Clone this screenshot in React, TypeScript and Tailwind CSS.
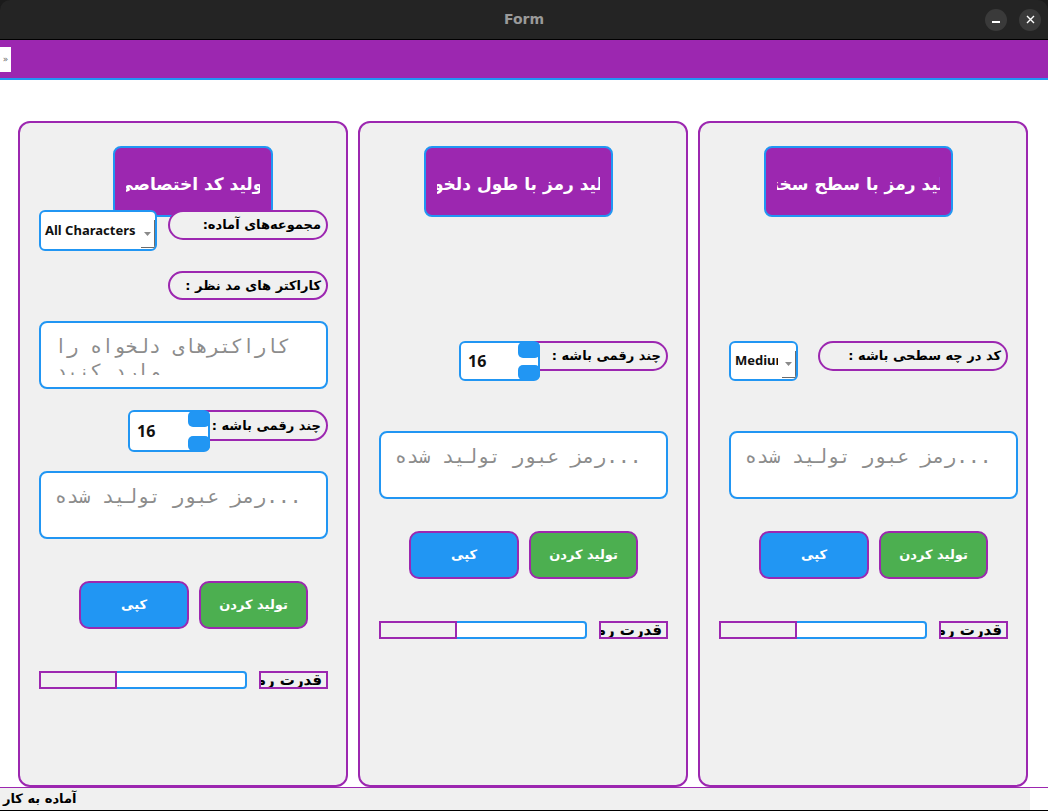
type Cls = { className?: string }

function TitleBox({ text, className = '' }: { text: string } & Cls) {
  return (
    <div className={`flex h-[71px] shrink-0 rounded-[8px] border-2 border-[#2196f3] bg-[#9c27b0] px-[11px] ${className}`}>
      <div className="flex flex-1 items-center justify-center overflow-hidden">
        <span dir="rtl" className="shrink-0 whitespace-nowrap pt-[6px] font-['DejaVu_Sans'] text-[17px] font-bold text-white">
          {text}
        </span>
      </div>
    </div>
  )
}

function Pill({ text, className = '' }: { text: string } & Cls) {
  return (
    <div
      dir="rtl"
      className={`flex shrink-0 items-center overflow-hidden whitespace-nowrap rounded-full border-2 border-[#9c27b0] bg-[#f0f0f0] pr-[5px] font-['DejaVu_Sans'] text-[13px] font-bold text-black ${className}`}
    >
      {text}
    </div>
  )
}

function Combo({ value, className = '' }: { value: string } & Cls) {
  return (
    <div className={`relative z-10 flex shrink-0 items-stretch overflow-hidden rounded-[6px] border-2 border-[#2196f3] bg-white ${className}`}>
      <div className="mr-[4px] flex min-w-0 flex-1 items-center overflow-hidden whitespace-nowrap pl-[4px] font-['Noto_Sans'] text-[13px] font-bold text-[#111]">
        {value}
      </div>
      <div className="mb-[1px] mt-[8px] flex w-[14px] shrink-0 items-center justify-center border-b border-r border-[#6b6b6b]">
        <svg width="7" height="4" viewBox="0 0 7 4">
          <path d="M0 0h7L3.5 4z" fill="#8a8a8a" />
        </svg>
      </div>
    </div>
  )
}

function Spin({ className = '' }: Cls) {
  return (
    <div className={`relative z-10 flex shrink-0 items-center rounded-[6px] border-2 border-[#2196f3] bg-white ${className}`}>
      <span className="flex-1 pl-[7px] font-['Noto_Sans'] text-[16px] font-bold text-[#111]">16</span>
      <div className="-mr-[2px] -my-[1px] flex w-[22px] flex-col justify-between self-stretch">
        <div className="h-[16px] rounded-[5px] bg-[#2196f3]" />
        <div className="h-[15px] rounded-[5px] bg-[#2196f3]" />
      </div>
    </div>
  )
}

function TextBox({ text, className = '' }: { text: string } & Cls) {
  return (
    <div className={`h-[68px] w-[289px] shrink-0 rounded-[8px] border-2 border-[#2196f3] bg-white pl-[14px] pr-[8px] pt-[11px] ${className}`}>
      <div dir="rtl" className="h-[41px] overflow-hidden text-left font-['DejaVu_Sans_Mono'] text-[19.5px] leading-[25px] text-[#8c8c8c]">
        {text}
      </div>
    </div>
  )
}

function Buttons({ className = '' }: Cls) {
  return (
    <div className={`flex shrink-0 gap-[10px] ${className}`}>
      <button
        type="button"
        className="h-[48px] w-[110px] rounded-[10px] border-2 border-[#9c27b0] bg-[#2196f3] font-['DejaVu_Sans'] text-[13px] font-bold text-white"
      >
        کپی
      </button>
      <button
        type="button"
        className="h-[48px] w-[109px] rounded-[10px] border-2 border-[#9c27b0] bg-[#4caf50] font-['DejaVu_Sans'] text-[13px] font-bold text-white"
      >
        تولید کردن
      </button>
    </div>
  )
}

function Strength({ className = '' }: Cls) {
  return (
    <div className={`flex shrink-0 items-start ${className}`}>
      <div className="flex h-[18px] w-[208px] rounded-[4px] border-2 border-[#2196f3] bg-white">
        <div className="-my-[2px] -ml-[2px] h-[18px] w-[78px] border-2 border-[#9c27b0] bg-[#f0f0f0]" />
      </div>
      <div
        dir="rtl"
        className="ml-[12px] h-[18px] w-[69px] overflow-hidden whitespace-nowrap border-2 border-[#9c27b0] pr-[4px] font-['DejaVu_Sans'] text-[15px] font-bold leading-[14px] text-black"
      >
        قدرت رمز:
      </div>
    </div>
  )
}

const panel = 'flex h-[666px] w-[330px] shrink-0 flex-col items-start rounded-[12px] border-2 border-[#9c27b0] bg-[#f0f0f0]'
const placeholder = '...رمز عبور تولید شده'

export default function App() {
  return (
    <div className="flex h-[811px] w-[1048px] flex-col overflow-hidden bg-[#1b1b1b]">
      {/* window title bar */}
      <div className="grid h-[40px] shrink-0 grid-cols-[1fr_auto_1fr] items-center rounded-t-[10px] border-b border-black bg-[#242424]">
        <div />
        <span className="font-['DejaVu_Sans'] text-[14px] font-bold text-[#9a9a9a]">Form</span>
        <div className="flex justify-end gap-[12px] pr-[7px]">
          <div className="flex h-[22px] w-[22px] items-center justify-center rounded-full bg-[#3a3a3a]">
            <div className="mt-[5px] h-[1.5px] w-[8px] bg-white" />
          </div>
          <div className="flex h-[22px] w-[22px] items-center justify-center rounded-full bg-[#3a3a3a]">
            <svg width="9" height="9" viewBox="0 0 9 9">
              <path d="M1 1l7 7M8 1L1 8" stroke="white" strokeWidth="1.4" />
            </svg>
          </div>
        </div>
      </div>

      {/* toolbar */}
      <div className="flex h-[40px] shrink-0 items-start border-b-2 border-[#2196f3] bg-[#9c27b0]">
        <div className="mt-[7px] flex h-[25px] w-[11px] items-center justify-center bg-white font-['DejaVu_Sans'] text-[9px] text-[#666]">
          »
        </div>
      </div>

      <main className="flex h-[707px] shrink-0 gap-[10px] bg-white pl-[18px] pt-[41px]">
        <section className={panel}>
          <TitleBox text="تولید کد اختصاصی" className="ml-[93px] mt-[23px] w-[160px]" />
          <div className="-mt-[7px] ml-[19px] flex shrink-0 items-start">
            <Combo value="All Characters" className="h-[41px] w-[118px]" />
            <Pill text="مجموعه‌های آماده:" className="ml-[11px] h-[30px] w-[160px]" />
          </div>
          <Pill text="کاراکتر های مد نظر :" className="ml-[148px] mt-[20px] h-[29px] w-[160px]" />
          <TextBox text="کاراکترهای دلخواه را وارد کنید" className="ml-[19px] mt-[21px]" />
          <div className="ml-[108px] mt-[21px] flex shrink-0 items-start">
            <Spin className="h-[42px] w-[82px]" />
            <Pill text="چند رقمی باشه :" className="-ml-[42px] h-[31px] w-[160px]" />
          </div>
          <TextBox text={placeholder} className="ml-[19px] mt-[19px]" />
          <Buttons className="ml-[59px] mt-[42px]" />
          <Strength className="ml-[19px] mt-[42px]" />
        </section>

        <section className={panel}>
          <TitleBox text="تولید رمز با طول دلخواه" className="ml-[64px] mt-[23px] w-[189px]" />
          <div className="ml-[99px] mt-[124px] flex shrink-0 items-start">
            <Spin className="h-[40px] w-[81px]" />
            <Pill text="چند رقمی باشه :" className="-ml-[32px] h-[30px] w-[160px]" />
          </div>
          <TextBox text={placeholder} className="ml-[19px] mt-[50px]" />
          <Buttons className="ml-[49px] mt-[32px]" />
          <Strength className="ml-[19px] mt-[42px]" />
        </section>

        <section className={panel}>
          <TitleBox text="تولید رمز با سطح سختی" className="ml-[64px] mt-[23px] w-[189px]" />
          <div className="ml-[29px] mt-[124px] flex shrink-0 items-start">
            <Combo value="Medium" className="h-[40px] w-[69px]" />
            <Pill text="کد در چه سطحی باشه :" className="ml-[20px] h-[30px] w-[190px]" />
          </div>
          <TextBox text={placeholder} className="ml-[29px] mt-[50px]" />
          <Buttons className="ml-[59px] mt-[32px]" />
          <Strength className="ml-[19px] mt-[42px]" />
        </section>
      </main>

      {/* status bar */}
      <div className="flex h-[24px] shrink-0 border-b border-t border-b-black border-t-[#9c27b0] bg-white">
        <div className="flex flex-1 items-center bg-[#f0f0f0] pl-[3px] font-['DejaVu_Sans'] text-[13px] font-bold text-black">
          <span dir="rtl">آماده به کار</span>
        </div>
        <div className="w-[18px]" />
      </div>
    </div>
  )
}
